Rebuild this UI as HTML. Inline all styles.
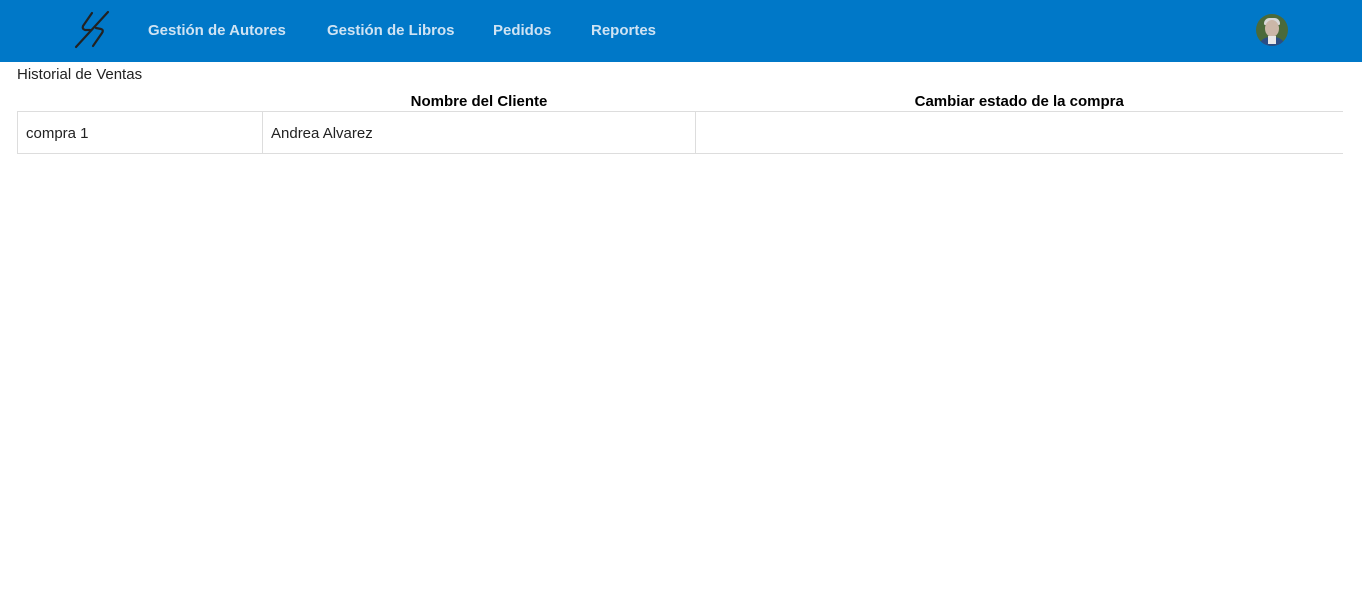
<!DOCTYPE html>
<html><head><meta charset="utf-8"><style>
body{margin:0;width:1362px;height:594px;background:#fff;font-family:"Segoe UI","Liberation Sans",sans-serif;overflow:hidden}
.nav{height:62px;background:#0078c8;position:relative}
.nav a{position:absolute;top:21px;color:#cfe3f3;font-weight:bold;font-size:15px;text-decoration:none;line-height:20px}
.av{position:absolute;left:1256px;top:14px;width:32px;height:32px;border-radius:50%;background:#4a6a3a;overflow:hidden}
.av .f{position:absolute;left:9px;top:6px;width:14px;height:17px;border-radius:50%;background:#cbb7a8}
.av .h{position:absolute;left:8px;top:4px;width:16px;height:7px;border-radius:8px 8px 2px 2px;background:#d8d8d8}
.av .s{position:absolute;left:2px;top:23px;width:28px;height:14px;border-radius:12px 12px 0 0;background:#2a4d86}
.av .c{position:absolute;left:12px;top:22px;width:8px;height:8px;background:#e8e8e8}
.title{position:absolute;left:17px;top:66px;font-size:15px;color:#222;line-height:18px}
table{position:absolute;left:17px;top:88px;width:1326px;border-collapse:collapse;font-size:15px}
th{height:22px;padding:0;font-weight:bold;color:#000;vertical-align:bottom;padding-bottom:1px}
td{border:1px solid #ddd;height:39px;padding:2px 8px 0;color:#222}
</style></head><body>
<div class="nav">
<svg style="position:absolute;left:70px;top:8px" width="45" height="45" viewBox="0 0 45 45" fill="none" stroke="#222" stroke-width="2.2" stroke-linecap="round" stroke-linejoin="round">
<path d="M38 4 L6 39"/>
<path d="M22 5 L13 18 Q12 21 15 22 L20 22"/>
<path d="M26 20 L31 21 Q34 22 32 25 L23 38"/>
</svg>
<a style="left:148px">Gestión de Autores</a>
<a style="left:327px">Gestión de Libros</a>
<a style="left:493px">Pedidos</a>
<a style="left:591px">Reportes</a>
<div class="av"><div class="h"></div><div class="f"></div><div class="s"></div><div class="c"></div></div>
</div>
<div class="title">Historial de Ventas</div>
<table>
<tr><th style="width:245px"></th><th style="width:433px">Nombre del Cliente</th><th>Cambiar estado de la compra</th></tr>
<tr><td>compra 1</td><td>Andrea Alvarez</td><td style="border-right:none"></td></tr>
</table>
</body></html>
